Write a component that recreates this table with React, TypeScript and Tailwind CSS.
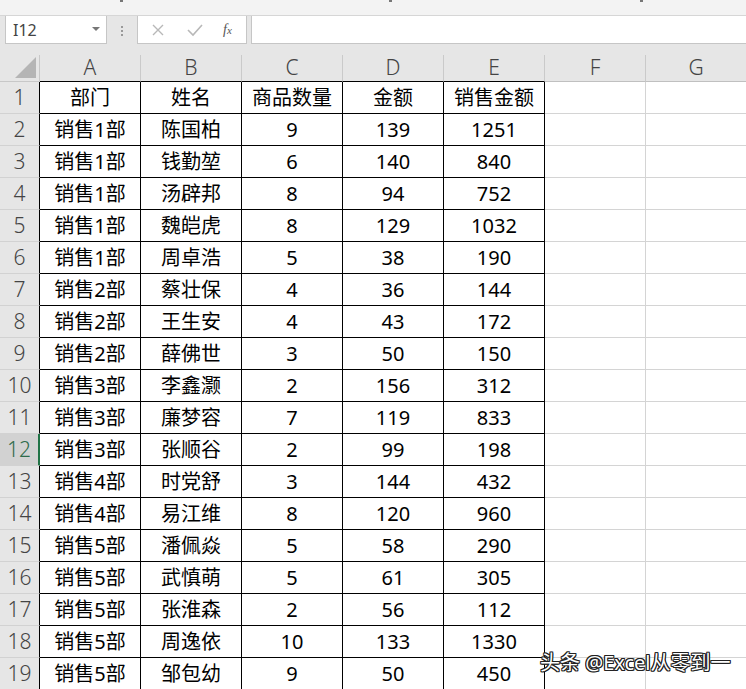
import React from 'react';

const rows: [string, string, number, number, number][] = [
  ['销售1部', '陈国柏', 9, 139, 1251],
  ['销售1部', '钱勤堃', 6, 140, 840],
  ['销售1部', '汤辟邦', 8, 94, 752],
  ['销售1部', '魏皑虎', 8, 129, 1032],
  ['销售1部', '周卓浩', 5, 38, 190],
  ['销售2部', '蔡壮保', 4, 36, 144],
  ['销售2部', '王生安', 4, 43, 172],
  ['销售2部', '薛佛世', 3, 50, 150],
  ['销售3部', '李鑫灏', 2, 156, 312],
  ['销售3部', '廉梦容', 7, 119, 833],
  ['销售3部', '张顺谷', 2, 99, 198],
  ['销售4部', '时党舒', 3, 144, 432],
  ['销售4部', '易江维', 8, 120, 960],
  ['销售5部', '潘佩焱', 5, 58, 290],
  ['销售5部', '武慎萌', 5, 61, 305],
  ['销售5部', '张淮森', 2, 56, 112],
  ['销售5部', '周逸依', 10, 133, 1330],
  ['销售5部', '邹包幼', 9, 50, 450],
];

const cols = ['A', 'B', 'C', 'D', 'E', 'F', 'G'];
const header = ['部门', '姓名', '商品数量', '金额', '销售金额'];

const Cell: React.FC<{ data: boolean; children?: React.ReactNode }> = ({ data, children }) => (
  <div
    className={`h-[32px] flex items-center justify-center text-[20px] text-black border-r border-b ${
      data ? 'border-black' : 'border-[#d4d4d4]'
    }`}
  >
    {children}
  </div>
);

export default function App() {
  const body: (string | number)[][] = [header, ...rows];

  return (
    <div
      className="relative w-[746px] h-[689px] overflow-hidden bg-white"
      style={{ fontFamily: '"Noto Sans", "Noto Sans CJK SC", sans-serif' }}
    >
      {/* ribbon edge */}
      <div className="h-[16px] bg-[#f3f3f3] border-b border-[#d6d6d6] relative">
        <span className="absolute left-[120px] top-0 w-[3px] h-[2px] bg-[#777]" />
        <span className="absolute left-[389px] top-0 w-[3px] h-[2px] bg-[#777]" />
        <span className="absolute left-[640px] top-0 w-[3px] h-[2px] bg-[#777]" />
      </div>

      {/* formula bar */}
      <div className="bg-[#e6e6e6] h-[39px] flex items-start pl-[5px]">
        <div className="w-[102px] h-[29px] -mt-px bg-white border border-[#c6c6c6] flex items-center justify-between pl-[7px] pr-[6px]">
          <span className="text-[16px] text-[#444]">I12</span>
          <svg width="8" height="5" viewBox="0 0 8 5">
            <polygon points="0,0 8,0 4,4" fill="#777" />
          </svg>
        </div>
        <div className="w-[30px] h-[29px] flex flex-col items-center justify-center gap-[2px]">
          <span className="w-[2px] h-[2px] bg-[#999]" />
          <span className="w-[2px] h-[2px] bg-[#999]" />
          <span className="w-[2px] h-[2px] bg-[#999]" />
        </div>
        <div className="w-[110px] h-[29px] -mt-px bg-white border border-[#c6c6c6] flex items-center pl-[12px]">
          <svg width="14" height="14" viewBox="0 0 14 14" className="ml-[1px]">
            <path d="M2 2 L12 12 M12 2 L2 12" stroke="#b8b8b8" strokeWidth="1.4" />
          </svg>
          <svg width="16" height="14" viewBox="0 0 16 14" className="ml-[22px]">
            <path d="M1 7 L6 12 L15 2" stroke="#b8b8b8" strokeWidth="1.6" fill="none" />
          </svg>
          <span className="ml-[20px] text-[14px] italic text-[#555]" style={{ fontFamily: '"Liberation Serif", serif' }}>
            f<span className="text-[11px]">x</span>
          </span>
        </div>
        <div className="flex-1 h-[29px] -mt-px ml-[4px] bg-white border-y border-l border-[#c6c6c6]" />
      </div>

      {/* grid */}
      <div className="grid grid-cols-[40px_repeat(7,101px)]">
        <div className="h-[27px] bg-[#e6e6e6] border-r border-b border-[#c8c8c8] flex items-end justify-end pr-[3px] pb-[3px]">
          <svg width="21" height="21" viewBox="0 0 21 21">
            <polygon points="21,0 21,21 0,21" fill="#b5b5b5" />
          </svg>
        </div>
        {cols.map((c, i) => (
          <div
            key={c}
            className={`h-[27px] bg-[#e6e6e6] border-r border-[#cacaca] border-b flex items-center justify-center text-[21px] font-light text-[#444] ${
              i < 5 ? 'border-b-black' : 'border-b-[#c0c0c0]'
            }`}
          >
            {c}
          </div>
        ))}

        {body.map((r, ri) => {
          const sel = ri === 11;
          return (
            <React.Fragment key={ri}>
              <div
                className={`h-[32px] flex items-center justify-center text-[21px] font-light border-b border-b-[#d2d2d2] ${
                  sel
                    ? 'bg-[#d2d2d2] text-[#2e6b4b] border-r-2 border-r-[#217346]'
                    : 'bg-[#e6e6e6] text-[#444] border-r border-r-black'
                }`}
              >
                {ri + 1}
              </div>
              {cols.map((c, ci) => (
                <Cell key={c} data={ci < 5}>
                  {ci < 5 ? r[ci] : null}
                </Cell>
              ))}
            </React.Fragment>
          );
        })}
      </div>

      {/* watermark */}
      <div
        className="absolute left-[540px] top-[648px] text-[20px] text-white whitespace-nowrap"
        style={{
          textShadow:
            '1px 0 0 #222, -1px 0 0 #222, 0 1px 0 #222, 0 -1px 0 #222, 1px 1px 0 #222, -1px -1px 0 #222, 1px -1px 0 #222, -1px 1px 0 #222',
        }}
      >
        头条 @Excel从零到一
      </div>
    </div>
  );
}
